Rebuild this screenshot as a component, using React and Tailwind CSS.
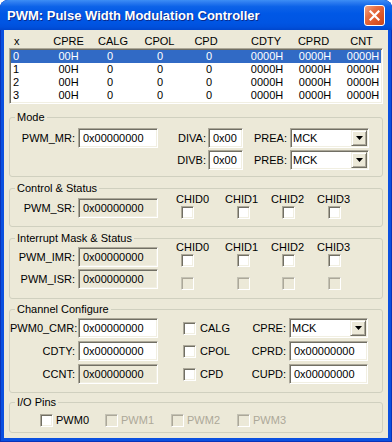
import React from "react";

const SUNKEN =
  "border border-t-[#ACA899] border-l-[#ACA899] border-b-white border-r-white shadow-[inset_1px_1px_0_#716F64,inset_-1px_-1px_0_#F1EFE2]";

function Field({ w, ro, children }) {
  return (
    <div
      className={`${SUNKEN} ${w} ${ro ? "bg-[#ECE9D8]" : "bg-white"} h-[20px] shrink-0 flex items-center pl-[4px] leading-[13px]`}
    >
      {children}
    </div>
  );
}

function Select({ w, value }) {
  return (
    <div
      className={`${SUNKEN} ${w} h-[20px] shrink-0 bg-white p-[1px] flex items-center justify-between`}
    >
      <span className="pl-[1px] leading-[13px]">{value}</span>
      <div className="w-[16px] h-[16px] bg-[#ECE9D8] border border-t-[#F1EFE2] border-l-[#F1EFE2] border-b-[#716F64] border-r-[#716F64] shadow-[inset_1px_1px_0_#ffffff,inset_-1px_-1px_0_#ACA899] flex items-center justify-center">
        <svg width="7" height="4" viewBox="0 0 7 4">
          <path d="M0 0H7L3.5 4Z" fill="#000" />
        </svg>
      </div>
    </div>
  );
}

function Check({ disabled }) {
  return (
    <div
      className={`w-[13px] h-[13px] shrink-0 border ${
        disabled
          ? "border-t-[#C4C2B4] border-l-[#C4C2B4] border-b-white border-r-white shadow-[inset_1px_1px_0_#ACA899] bg-[#ECE9D8]"
          : "border-t-[#ACA899] border-l-[#ACA899] border-b-white border-r-white shadow-[inset_1px_1px_0_#716F64,inset_-1px_-1px_0_#F1EFE2] bg-white"
      }`}
    />
  );
}

function Group({ title, h, extra, children }) {
  return (
    <div
      className={`relative shrink-0 border border-[#D0D0BF] rounded-[3px] ${h} ${extra}`}
    >
      <span className="absolute left-[5px] -top-[7px] px-[2px] bg-[#ECE9D8] leading-[13px] whitespace-nowrap">
        {title}
      </span>
      {children}
    </div>
  );
}

function Label({ w, children }) {
  return (
    <div className={`${w} shrink-0 text-right whitespace-nowrap leading-[13px]`}>
      {children}
    </div>
  );
}

function C({ ml, children }) {
  return (
    <div className={`w-0 shrink-0 flex justify-center whitespace-nowrap ${ml}`}>
      {children}
    </div>
  );
}

function DataRow({ idx, sel }) {
  return (
    <div
      className={`h-[13px] flex items-center leading-[13px] ${
        sel ? "bg-[#316AC5] text-white" : ""
      }`}
    >
      <div className="w-[57.5px] shrink-0 pl-[2px]">{idx}</div>
      <C ml="ml-0">00H</C>
      <C ml="ml-[41.5px]">0</C>
      <C ml="ml-[50px]">0</C>
      <C ml="ml-[49px]">0</C>
      <C ml="ml-[58px]">0000H</C>
      <C ml="ml-[48px]">0000H</C>
      <C ml="ml-[48px]">0000H</C>
    </div>
  );
}

function ChidBlock({ twoRows }) {
  const cols = [
    { w: "w-[49px]", cb: "ml-[5px]", name: "CHID0" },
    { w: "w-[46px]", cb: "ml-[12px]", name: "CHID1" },
    { w: "w-[46px]", cb: "ml-[11px]", name: "CHID2" },
    { w: "w-[46px]", cb: "ml-[11px]", name: "CHID3" },
  ];
  return (
    <div className="flex ml-[18px]">
      {cols.map((c) => (
        <div key={c.name} className={`${c.w} shrink-0 flex flex-col`}>
          <div className="h-[13px] leading-[13px] whitespace-nowrap">{c.name}</div>
          <div className={c.cb}>
            <Check />
          </div>
          {twoRows && (
            <div className={`${c.cb} mt-[10px]`}>
              <Check disabled />
            </div>
          )}
        </div>
      ))}
    </div>
  );
}

function ChanRow({ label, value, ro, cb, right, rightEl }) {
  return (
    <div className="h-[20px] flex items-center">
      <Label w="w-[65px]">{label}</Label>
      <div className="ml-[3px]">
        <Field w="w-[80px]" ro={ro}>
          {value}
        </Field>
      </div>
      <div className="ml-[25px]">
        <Check />
      </div>
      <div className="ml-[4px] w-[50px] shrink-0 leading-[13px]">{cb}</div>
      <Label w="w-[36px]">{right}</Label>
      <div className="ml-[3px]">{rightEl}</div>
    </div>
  );
}

function Pin({ w, name, disabled }) {
  return (
    <div className={`${w} shrink-0 flex items-center`}>
      <Check disabled={disabled} />
      <span
        className={`ml-[3px] leading-[13px] ${disabled ? "text-[#ACA899]" : ""}`}
      >
        {name}
      </span>
    </div>
  );
}

export default function App() {
  return (
    <div className="w-[392px] h-[442px] flex flex-col bg-[#0A50E0] rounded-t-[8px] overflow-hidden font-['Liberation_Sans',Arial,sans-serif] shadow-[inset_0_0_0_1px_#0A33B8]">
      {/* Title bar */}
      <div className="h-[30px] shrink-0 flex items-center justify-between pl-[7px] pr-[7px] bg-[linear-gradient(to_bottom,#3D8EF5_0%,#2C7CF0_8%,#0D63E8_22%,#0058E6_45%,#0055E3_75%,#0050DC_90%,#0046CC_100%)]">
        <span className="text-white font-bold text-[13px] leading-[15px] [text-shadow:1px_1px_0_#0A2A8A]">
          PWM: Pulse Width Modulation Controller
        </span>
        <div className="w-[21px] h-[21px] rounded-[3px] border border-white flex items-center justify-center bg-[linear-gradient(135deg,#F3A585_0%,#E66E42_35%,#DB5426_70%,#C9461C_100%)]">
          <svg width="11" height="11" viewBox="0 0 11 11">
            <path
              d="M1.5 1.5L9.5 9.5M9.5 1.5L1.5 9.5"
              stroke="#fff"
              strokeWidth="2.2"
              strokeLinecap="square"
            />
          </svg>
        </div>
      </div>

      {/* Body */}
      <div className="mx-[4px] mb-[4px] flex-1 bg-[#ECE9D8] flex flex-col px-[5px] pt-[5px] text-[11px] text-black">
        {/* List header */}
        <div className="h-[13px] shrink-0 flex items-center pl-[2px] leading-[13px]">
          <div className="w-[57.5px] shrink-0 pl-[3px]">x</div>
          <C ml="ml-0">CPRE</C>
          <C ml="ml-[44.5px]">CALG</C>
          <C ml="ml-[46.5px]">CPOL</C>
          <C ml="ml-[46.5px]">CPD</C>
          <C ml="ml-[60px]">CDTY</C>
          <C ml="ml-[47.5px]">CPRD</C>
          <C ml="ml-[48px]">CNT</C>
        </div>
        {/* List */}
        <div className={`${SUNKEN} h-[56px] shrink-0 bg-white p-[1px]`}>
          <DataRow idx="0" sel />
          <DataRow idx="1" />
          <DataRow idx="2" />
          <DataRow idx="3" />
        </div>

        {/* Mode */}
        <Group title="Mode" h="h-[60px]" extra="mt-[13px]">
          <div className="pt-[10px] flex flex-col gap-[2px]">
            <div className="h-[20px] flex items-center">
              <Label w="w-[65px]">PWM_MR:</Label>
              <div className="ml-[3px]">
                <Field w="w-[80px]">0x00000000</Field>
              </div>
              <Label w="w-[48px]">DIVA:</Label>
              <div className="ml-[2px]">
                <Field w="w-[35px]">0x00</Field>
              </div>
              <Label w="w-[44px]">PREA:</Label>
              <div className="ml-[3px]">
                <Select w="w-[79px]" value="MCK" />
              </div>
            </div>
            <div className="h-[20px] flex items-center">
              <div className="w-[148px] shrink-0" />
              <Label w="w-[48px]">DIVB:</Label>
              <div className="ml-[2px]">
                <Field w="w-[35px]">0x00</Field>
              </div>
              <Label w="w-[44px]">PREB:</Label>
              <div className="ml-[3px]">
                <Select w="w-[79px]" value="MCK" />
              </div>
            </div>
          </div>
        </Group>

        {/* Control & Status */}
        <Group title="Control & Status" h="h-[39px]" extra="mt-[11px]">
          <div className="flex items-start">
            <div className="pt-[9px] flex items-center">
              <Label w="w-[65px]">PWM_SR:</Label>
              <div className="ml-[3px]">
                <Field w="w-[80px]" ro>
                  0x00000000
                </Field>
              </div>
            </div>
            <div className="pt-[4px]">
              <ChidBlock />
            </div>
          </div>
        </Group>

        {/* Interrupt */}
        <Group title="Interrupt Mask & Status" h="h-[61px]" extra="mt-[11px]">
          <div className="flex items-start">
            <div className="pt-[8px] flex flex-col gap-[2px]">
              <div className="h-[20px] flex items-center">
                <Label w="w-[65px]">PWM_IMR:</Label>
                <div className="ml-[3px]">
                  <Field w="w-[80px]" ro>
                    0x00000000
                  </Field>
                </div>
              </div>
              <div className="h-[20px] flex items-center">
                <Label w="w-[65px]">PWM_ISR:</Label>
                <div className="ml-[3px]">
                  <Field w="w-[80px]" ro>
                    0x00000000
                  </Field>
                </div>
              </div>
            </div>
            <div className="pt-[2px]">
              <ChidBlock twoRows />
            </div>
          </div>
        </Group>

        {/* Channel Configure */}
        <Group title="Channel Configure" h="h-[84px]" extra="mt-[10px]">
          <div className="pt-[8px] flex flex-col gap-[3px]">
            <ChanRow
              label="PWM0_CMR:"
              value="0x00000000"
              cb="CALG"
              right="CPRE:"
              rightEl={<Select w="w-[79px]" value="MCK" />}
            />
            <ChanRow
              label="CDTY:"
              value="0x00000000"
              cb="CPOL"
              right="CPRD:"
              rightEl={<Field w="w-[79px]">0x00000000</Field>}
            />
            <ChanRow
              label="CCNT:"
              value="0x00000000"
              ro
              cb="CPD"
              right="CUPD:"
              rightEl={<Field w="w-[79px]">0x00000000</Field>}
            />
          </div>
        </Group>

        {/* I/O Pins */}
        <Group title="I/O Pins" h="h-[31px]" extra="mt-[9px]">
          <div className="pt-[11px] pl-[30px] flex items-center">
            <Pin w="w-[65px]" name="PWM0" />
            <Pin w="w-[66px]" name="PWM1" disabled />
            <Pin w="w-[66px]" name="PWM2" disabled />
            <Pin w="w-[66px]" name="PWM3" disabled />
          </div>
        </Group>
      </div>
    </div>
  );
}
